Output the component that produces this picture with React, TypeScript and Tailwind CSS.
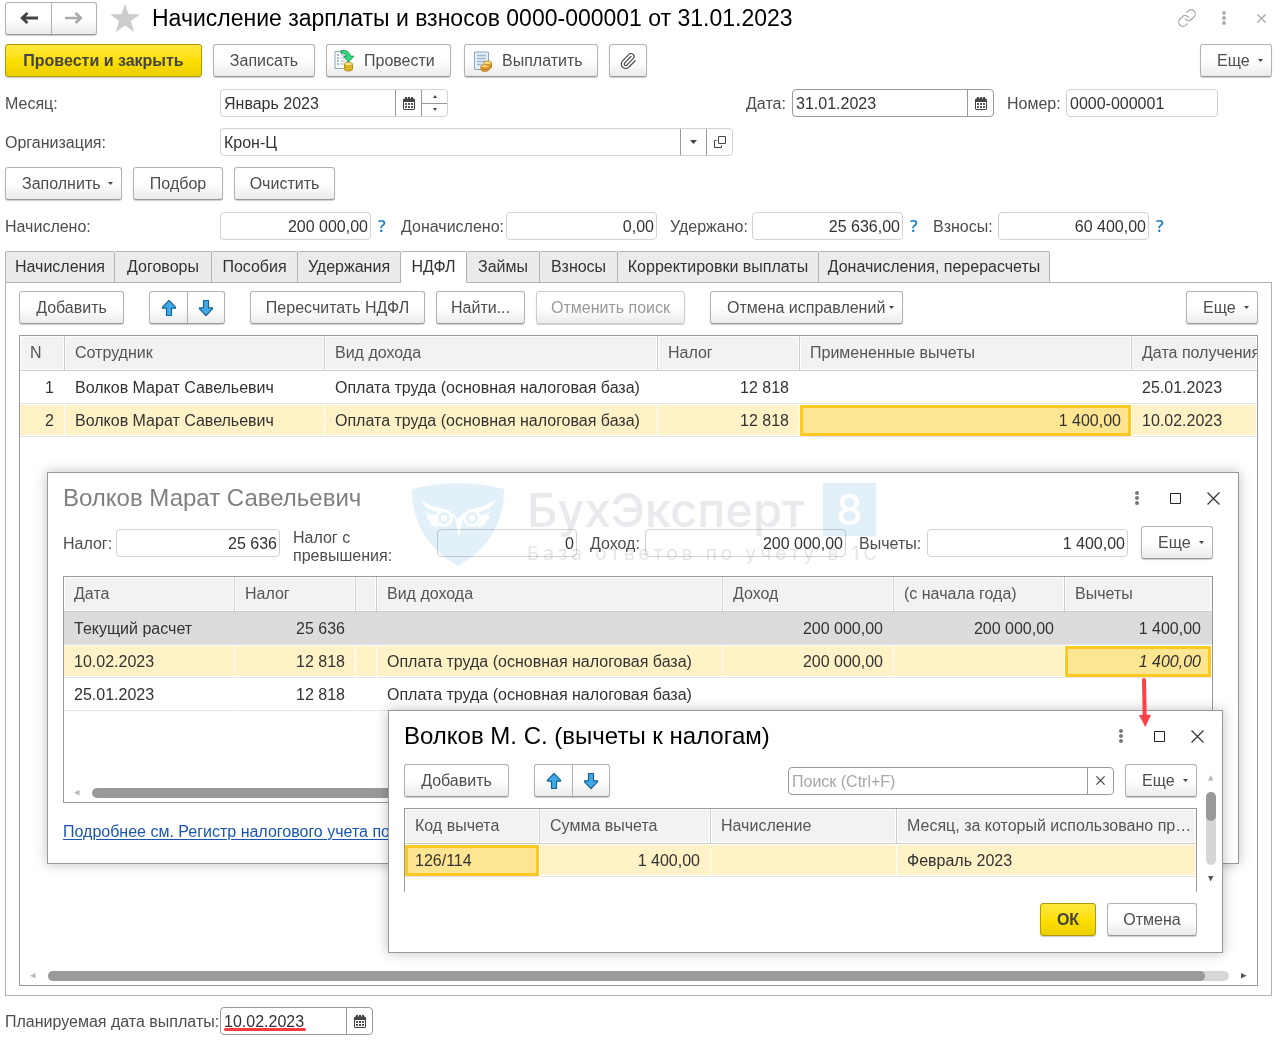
import React from "react";
import { Link, Paperclip } from "lucide-react";

const BTN =
  "flex h-[33px] shrink-0 items-center rounded-[3px] border border-[#b3b3b3] border-b-[#999999] bg-linear-to-b from-white from-50% to-[#ebebeb] whitespace-nowrap shadow-[0_1px_1px_#00000033]";
const YELLOW =
  "flex h-[33px] shrink-0 items-center justify-center rounded-[3px] border border-[#b09a05] bg-linear-to-b from-[#ffe83a] via-[#fddf00] to-[#ebcf00] font-bold whitespace-nowrap text-[#444444] shadow-[0_1px_1px_#00000033]";
const TABLE = "w-full table-fixed border-separate border-spacing-0 text-[#333333]";
const LABEL = "shrink-0 pt-[2px] whitespace-nowrap ";

function Caret() {
  return (
    <svg width="5" height="3" viewBox="0 0 5 3" aria-hidden="true">
      <path d="M0 0h5L2.500 3z" fill="#444" />
    </svg>
  );
}

function Triangle({ dir, muted }: { dir: "up" | "down" | "left" | "right"; muted?: boolean }) {
  const d = {
    up: "M0 5.500h5.500L2.700 0z",
    down: "M0 0h5.500L2.700 5.500z",
    left: "M5.500 0v5.500L0 2.700z",
    right: "M0 0v5.500l5.500-2.800z",
  }[dir];
  return (
    <svg width="6" height="6" viewBox="0 0 6 6" className="shrink-0" aria-hidden="true">
      <path d={d} fill={muted ? "#b8b8b8" : "#555"} />
    </svg>
  );
}

function MenuButton({ children, width = "w-[72px]" }: { children: React.ReactNode; width?: string }) {
  return (
    <button type="button" className={BTN + " justify-between pr-[8px] pl-[16px] " + width}>
      {children}
      <Caret />
    </button>
  );
}

function Button({
  children,
  disabled,
  width,
}: {
  children: React.ReactNode;
  disabled?: boolean;
  width: string;
}) {
  return (
    <button
      type="button"
      disabled={disabled}
      className={BTN + " justify-center disabled:border-[#cccccc] disabled:text-[#999999] " + width}
    >
      {children}
    </button>
  );
}

function BlueArrow({ down }: { down?: boolean }) {
  return (
    <svg width="16" height="18" viewBox="0 0 16 18" className={down ? "rotate-180" : ""} aria-hidden="true">
      <path
        d="M8 1.500 14.500 8.200v1H10.500v7.300H5.500V9.200H1.500v-1z"
        fill="#41abea"
        stroke="#17628f"
        strokeWidth="1.200"
        strokeLinejoin="round"
      />
    </svg>
  );
}

function MoveButtons() {
  return (
    <div className="ml-[25px] flex">
      <button type="button" aria-label="Вверх" className={BTN + " w-[39px] justify-center rounded-r-none"}>
        <BlueArrow />
      </button>
      <button type="button" aria-label="Вниз" className={BTN + " -ml-px w-[38px] justify-center rounded-l-none"}>
        <BlueArrow down />
      </button>
    </div>
  );
}

function CalendarIcon() {
  return (
    <svg width="12" height="13" viewBox="0 0 12 13" aria-hidden="true">
      <path
        fillRule="evenodd"
        d="M1 1.500h1V0h2v1.500h1V0h2v1.500h1V0h2v1.500h1l1 1V12l-1 1H1l-1-1V2.500zM1 5v7h10V5z"
        fill="#444"
      />
      <path d="M2 6h2v2H2zM5 6h2v2H5zM8 6h2v2H8zM2 9h2v2H2zM5 9h2v2H5zM8 9h2v2H8z" fill="#555" />
    </svg>
  );
}

function CalendarButton() {
  return (
    <button
      type="button"
      aria-label="Выбрать дату"
      className="flex w-[26px] shrink-0 items-center justify-center border-l border-[#999999]"
    >
      <CalendarIcon />
    </button>
  );
}

function Box({
  id,
  value,
  className,
  right,
  dark,
  children,
}: {
  id: string;
  value?: string;
  className: string;
  right?: boolean;
  dark?: boolean;
  children?: React.ReactNode;
}) {
  return (
    <div
      className={
        "flex h-[28px] min-w-0 overflow-hidden rounded-[4px] border bg-white " +
        (dark ? "border-[#999999] " : "border-[#d2d2d2] ") +
        className
      }
    >
      <input
        id={id}
        type="text"
        defaultValue={value}
        className={
          "w-0 min-w-0 flex-1 px-[3px] pt-[2px] text-[#333333] outline-none " + (right ? "pr-[2px] text-right" : "")
        }
      />
      {children}
    </div>
  );
}

function Help() {
  return (
    <a href="#help" className="ml-[7px] w-[23px] font-['Open_Sans',sans-serif] text-[17px] font-semibold text-[#1b7fc4]">
      ?
    </a>
  );
}

function PostIcon() {
  return (
    <svg width="22" height="22" viewBox="0 0 22 22" aria-hidden="true">
      <path d="M1 1.500h12.500v17H1z" fill="#fafcfd" stroke="#8fa3b5" />
      <path d="M3 5h2M3 8h2M3 11h2M3 14h2" stroke="#5c7894" />
      <path d="M6.500 5h5M6.500 8h5M6.500 11h5M6.500 14h5" stroke="#a9b9c7" />
      <path d="M7 .6c5-.8 9 1.400 9.300 5.600h3.500L14.600 12 9.700 6.200h3C12.300 3.800 10 2.800 7 3.200z" fill="#2fdc82" stroke="#159a55" />
      <path d="M10.500 14v5c0 1.300 2 2 4 2s4-.7 4-2v-5z" fill="#f3c93a" stroke="#b98b16" />
      <path d="M10.500 16.500c1 1.400 7 1.400 8 0M10.500 18.800c1 1.400 7 1.400 8 0" fill="none" stroke="#c99a1c" />
      <ellipse cx="14.500" cy="14" rx="4" ry="1.700" fill="#fdeb9a" stroke="#c99a1c" />
    </svg>
  );
}

function PayIcon() {
  return (
    <svg width="20" height="22" viewBox="0 0 20 22" aria-hidden="true">
      <path d="M1.500 2h14v17.500h-14z" fill="#e3eff8" stroke="#8aa6c0" />
      <path d="M4 5.500h9M4 8.500h9M4 11.500h9M4 14.500h5" stroke="#9db8cf" strokeWidth="1.300" />
      <path d="M8 16.500v3c0 2.400 7 2.400 8 .3l2.500-2.800v-4z" fill="#e9a93a" stroke="#b87a18" />
      <path d="M8.300 18.500c1 1.700 6 1.700 7.500 0l2.700-3" fill="none" stroke="#b87a18" />
      <ellipse cx="12" cy="16.300" rx="4" ry="1.700" fill="#fcd877" stroke="#c98b20" />
      <ellipse cx="14.500" cy="12.800" rx="4" ry="1.800" fill="#fddf87" stroke="#c98b20" />
    </svg>
  );
}

function Dots({ color }: { color: string }) {
  return (
    <svg width="6" height="14" viewBox="0 0 6 14" aria-hidden="true">
      <circle cx="3" cy="2" r="2" fill={color} />
      <circle cx="3" cy="7" r="2" fill={color} />
      <circle cx="3" cy="12" r="2" fill={color} />
    </svg>
  );
}

function Cross({ size, color, weight }: { size: number; color: string; weight: number }) {
  return (
    <svg width={size} height={size} viewBox="0 0 12 12" aria-hidden="true">
      <path d="M.5.5l11 11M11.500.5l-11 11" stroke={color} strokeWidth={weight} />
    </svg>
  );
}

function WindowTitle({ title, active }: { title: string; active?: boolean }) {
  const b = "flex h-[24px] w-[38px] items-center justify-center";
  return (
    <div className="flex h-[50px] items-center">
      <h2 className={"text-[24px] leading-[28px] whitespace-nowrap " + (active ? "text-black" : "text-[#808080]")}>
        {title}
      </h2>
      <div className="-mr-[19px] ml-auto flex">
        <button type="button" aria-label="Меню" className={b}>
          <Dots color="#777" />
        </button>
        <button type="button" aria-label="Развернуть" className={b}>
          <svg width="11" height="11" viewBox="0 0 11 11" aria-hidden="true">
            <path d="M.5.5h10v10H.5z" fill="none" stroke="#222" />
          </svg>
        </button>
        <button type="button" aria-label="Закрыть" className={b}>
          <Cross size={13} color="#333" weight={1.1} />
        </button>
      </div>
    </div>
  );
}

function HeadRow({ names }: { names: string[] }) {
  return (
    <thead>
      <tr>
        {names.map((n, i) => (
          <th
            key={i}
            scope="col"
            className="h-[35px] truncate border-r border-b border-[#cccccc] bg-[#f2f2f2] px-[10px] text-left font-normal text-[#555555] shadow-[inset_0_0_0_1px_#ffffff] last:border-r-transparent last:pr-0"
          >
            {n}
          </th>
        ))}
      </tr>
    </thead>
  );
}

type Tone = "plain" | "gray" | "yellow";

function Row({
  cells,
  right,
  tone,
  selected,
  italic,
}: {
  cells: string[];
  right: number[];
  tone: Tone;
  selected?: number;
  italic?: boolean;
}) {
  const tones = {
    plain: "border-r-transparent border-t-transparent",
    gray: "border-r-transparent border-t-transparent bg-[#dcdcdc]",
    yellow: "border-r-white border-t-white bg-[#fef2c6] shadow-[inset_0_-1px_#ffffff]",
  };
  const sel =
    "border-r-white border-t-white bg-[#fee591] shadow-[inset_0_0_0_3px_#fbc920]" + (italic ? " italic" : "");
  return (
    <tr>
      {cells.map((c, i) => (
        <td
          key={i}
          className={
            "h-[33px] overflow-hidden border-t border-r border-b border-b-[#e5e5e5] px-[10px] pt-px whitespace-nowrap " +
            (right.includes(i) ? "text-right " : "") +
            (selected === i ? sel : tones[tone])
          }
        >
          {c}
        </td>
      ))}
    </tr>
  );
}

function Watermark() {
  return (
    <div className="pointer-events-none absolute top-[10px] left-[364px] flex mix-blend-multiply" aria-hidden="true">
      <svg width="92" height="83" viewBox="0 0 92 83">
        <path d="M0 6Q46-6 92 6C92 40 76 66 46 83 16 66 0 40 0 6z" fill="#e2f0f9" />
        <path
          d="M9 16c6 7 18 8 27 12 5 2 7 5 10 8 3-3 5-6 10-8 9-4 21-5 27-12-2 8-9 12-17 13-6 0-12 2-15 6l-4 19-4-19c-3-4-9-6-15-6C18 28 11 24 9 16z"
          fill="#fff"
        />
        <path
          d="M12 27c4 4 8 5 13 5l-2 6c1 2 2 4 4 6-5 0-9-2-10-5h3c-4-2-6-4-6-7l4 1c-3-2-5-4-6-6zM80 27c-4 4-8 5-13 5l2 6c-1 2-2 4-4 6 5 0 9-2 10-5h-3c4-2 6-4 6-7l-4 1c3-2 5-4 6-6z"
          fill="#fff"
        />
        <circle cx="32" cy="35" r="9" fill="#fff" />
        <circle cx="60" cy="35" r="9" fill="#fff" />
        <circle cx="32" cy="35" r="4.500" fill="none" stroke="#e2f0f9" strokeWidth="3" />
        <circle cx="60" cy="35" r="4.500" fill="none" stroke="#e2f0f9" strokeWidth="3" />
      </svg>
      <div className="ml-[23px] font-[Inter,'Open_Sans',sans-serif]">
        <div className="flex h-[53px] w-[349px] items-center justify-between">
          <span className="text-[47px] leading-[53px] font-medium text-[#e9e9ee]">БухЭксперт</span>
          <span className="flex h-[53px] w-[53px] items-center justify-center bg-[#e2f0f9] text-[42px] leading-[53px] font-medium text-white">
            8
          </span>
        </div>
        <div className="mt-[8px] text-[19px] leading-[20px] tracking-[4px] whitespace-nowrap text-[#e6e6ea]">
          База ответов по учету в 1С
        </div>
      </div>
    </div>
  );
}

function EmployeeWindow() {
  return (
    <section className="absolute top-[136px] right-[18px] left-[27px] border border-[#999999] bg-white pr-[25px] pb-[22px] pl-[15px] shadow-[0_0_12px_#00000040]">
      <WindowTitle title="Волков Марат Савельевич" />
      <div className="mt-[3px] flex h-[33px] items-center">
        <label htmlFor="tax" className={LABEL + "w-[53px]"}>Налог:</label>
        <Box id="tax" value="25 636" right className="grow basis-[164px]" />
        <label htmlFor="over" className="mt-[8px] ml-[13px] w-[144px] shrink-0 leading-[18px]">
          Налог с<br />превышения:
        </label>
        <Box id="over" value="0" right className="grow basis-[140px]" />
        <label htmlFor="income" className={LABEL + "ml-[13px] w-[55px]"}>Доход:</label>
        <Box id="income" value="200 000,00" right className="grow basis-[201px]" />
        <label htmlFor="deduct" className={LABEL + "ml-[13px] w-[68px]"}>Вычеты:</label>
        <Box id="deduct" value="1 400,00" right className="mr-[13px] grow basis-[201px]" />
        <MenuButton>Еще</MenuButton>
      </div>
      <div className="mt-[17px] flex min-h-[227px] flex-col border border-[#999999]">
        <table className={TABLE}>
          <colgroup>
            <col className="w-[171px]" />
            <col className="w-[121px]" />
            <col className="w-[21px]" />
            <col />
            <col className="w-[171px]" />
            <col className="w-[171px]" />
            <col className="w-[147px]" />
          </colgroup>
          <HeadRow names={["Дата", "Налог", "", "Вид дохода", "Доход", "(с начала года)", "Вычеты"]} />
          <tbody>
            <Row
              tone="gray"
              right={[1, 4, 5, 6]}
              cells={["Текущий расчет", "25 636", "", "", "200 000,00", "200 000,00", "1 400,00"]}
            />
            <Row
              tone="yellow"
              right={[1, 4, 5, 6]}
              selected={6}
              italic
              cells={["10.02.2023", "12 818", "", "Оплата труда (основная налоговая база)", "200 000,00", "", "1 400,00"]}
            />
            <Row
              tone="plain"
              right={[1, 4, 5, 6]}
              cells={["25.01.2023", "12 818", "", "Оплата труда (основная налоговая база)", "", "", ""]}
            />
          </tbody>
        </table>
        <div className="mt-auto mb-[4px] flex items-center gap-[12px] px-[10px]">
          <Triangle dir="left" muted />
          <div className="h-[10px] flex-1 rounded-full bg-[#999999]" />
          <Triangle dir="right" />
        </div>
      </div>
      <a
        href="#register"
        className="mt-[20px] block leading-[18px] whitespace-nowrap text-[#1a56b0] underline decoration-[#1a56b0] decoration-1 underline-offset-2"
      >
        Подробнее см. Регистр налогового учета по&nbsp;
      </a>
      <Watermark />
    </section>
  );
}

function DeductionsWindow() {
  return (
    <section className="absolute top-[374px] right-[34px] left-[368px] border border-[#999999] bg-white pr-[25px] pb-[16px] pl-[15px] shadow-[0_0_12px_#00000040]">
      <WindowTitle title="Волков М. С. (вычеты к налогам)" active />
      <div className="mt-[3px] flex items-center">
        <Button width="w-[105px]">Добавить</Button>
        <MoveButtons />
        <div className="mr-[11px] ml-auto flex h-[28px] w-[326px] rounded-[4px] border border-[#999999]">
          <input
            type="text"
            aria-label="Поиск"
            placeholder="Поиск (Ctrl+F)"
            className="w-0 flex-1 px-[3px] pt-[2px] outline-none placeholder:text-[#a6a6a6]"
          />
          <button
            type="button"
            aria-label="Очистить поиск"
            className="flex w-[26px] items-center justify-center border-l border-[#999999]"
          >
            <Cross size={9} color="#444" weight={1.6} />
          </button>
        </div>
        <MenuButton>Еще</MenuButton>
      </div>
      <div className="mt-[11px] min-h-[84px] border border-b-0 border-[#999999]">
        <table className={TABLE}>
          <colgroup>
            <col className="w-[135px]" />
            <col className="w-[171px]" />
            <col className="w-[186px]" />
            <col />
          </colgroup>
          <HeadRow names={["Код вычета", "Сумма вычета", "Начисление", "Месяц, за который использовано право на вычет"]} />
          <tbody>
            <Row tone="yellow" right={[1]} selected={0} cells={["126/114", "1 400,00", "", "Февраль 2023"]} />
          </tbody>
        </table>
      </div>
      <div className="mt-[11px] flex justify-end gap-[11px]">
        <button type="button" className={YELLOW + " w-[56px]"}>ОК</button>
        <Button width="w-[90px]">Отмена</Button>
      </div>
      <div className="absolute top-[64px] right-[5px] flex h-[107px] w-[12px] flex-col items-center">
        <Triangle dir="up" muted />
        <div className="my-[11px] w-[10px] flex-1 rounded-full bg-[#d6d6d6]">
          <div className="h-[29px] rounded-full bg-[#999999]" />
        </div>
        <Triangle dir="down" />
      </div>
    </section>
  );
}

const TABS = [
  { name: "Начисления", width: "w-[110px]" },
  { name: "Договоры", width: "w-[97px]" },
  { name: "Пособия", width: "w-[86px]" },
  { name: "Удержания", width: "w-[103px]" },
  { name: "НДФЛ", width: "w-[66px]" },
  { name: "Займы", width: "w-[73px]" },
  { name: "Взносы", width: "w-[78px]" },
  { name: "Корректировки выплаты", width: "w-[201px]" },
  { name: "Доначисления, перерасчеты", width: "w-[231px]" },
];

export default function App() {
  return (
    <main className="bg-white pt-[3px] pr-[16px] pb-[13px] pl-[5px] font-['Liberation_Sans',Arial,sans-serif] text-[16px] leading-[20px] text-[#4d4d4d]">
      <header className="flex h-[30px] items-center">
        <div className="flex">
          <button type="button" aria-label="Назад" className={BTN + " h-[30px] w-[47px] justify-center rounded-r-none"}>
            <svg width="18" height="12" viewBox="0 0 18 12" aria-hidden="true">
              <path d="M7.500 1 2.200 6l5.300 5M2.500 6H18" fill="none" stroke="#444" strokeWidth="2.800" />
            </svg>
          </button>
          <button type="button" aria-label="Вперед" className={BTN + " -ml-px h-[30px] w-[46px] justify-center rounded-l-none"}>
            <svg width="18" height="12" viewBox="0 0 18 12" aria-hidden="true">
              <path d="M10.500 1l5.300 5-5.300 5M15.500 6H0" fill="none" stroke="#aaa" strokeWidth="2.600" />
            </svg>
          </button>
        </div>
        <button type="button" aria-label="В избранное" className="ml-[13px] shrink-0">
          <svg width="30" height="28" viewBox="0 0 30 28" aria-hidden="true">
            <path d="M15 0l3.700 10.300H30L20.900 17l3.400 11L15 21.400 5.700 28l3.400-11L0 10.300h11.300z" fill="#cccccc" />
          </svg>
        </button>
        <h1 className="ml-[12px] text-[23px] leading-[28px] whitespace-nowrap text-black">
          Начисление зарплаты и взносов 0000-000001 от 31.01.2023
        </h1>
        <div className="ml-auto flex items-center">
          <button type="button" aria-label="Ссылка">
            <Link size={20} strokeWidth={1.5} color="#aaaaaa" />
          </button>
          <button type="button" aria-label="Меню" className="ml-[24px]">
            <Dots color="#b0b0b0" />
          </button>
          <button type="button" aria-label="Закрыть" className="mr-[6px] ml-[30px]">
            <Cross size={9} color="#aaa" weight={1.8} />
          </button>
        </div>
      </header>

      <div className="mt-[11px] flex gap-[11px]">
        <button type="button" className={YELLOW + " w-[197px]"}>Провести и закрыть</button>
        <Button width="w-[102px]">Записать</Button>
        <button type="button" className={BTN + " w-[125px] gap-[8px] pl-[7px]"}>
          <PostIcon />
          Провести
        </button>
        <button type="button" className={BTN + " ml-[2px] w-[134px] gap-[9px] pl-[8px]"}>
          <PayIcon />
          Выплатить
        </button>
        <button type="button" aria-label="Вложения" className={BTN + " w-[38px] justify-center"}>
          <Paperclip size={18} strokeWidth={1.5} color="#444" />
        </button>
        <div className="ml-auto">
          <MenuButton>Еще</MenuButton>
        </div>
      </div>

      <div className="mt-[12px] flex items-center">
        <label htmlFor="month" className={LABEL + "w-[215px]"}>Месяц:</label>
        <Box id="month" value="Январь 2023" className="w-[228px]">
          <CalendarButton />
          <div className="flex w-[26px] flex-col border-l border-[#999999]">
            <button type="button" aria-label="Следующий месяц" className="flex flex-1 items-center justify-center border-b border-[#999999]">
              <svg width="4" height="3" viewBox="0 0 4 3" aria-hidden="true"><path d="M0 3h4L2 0z" fill="#444" /></svg>
            </button>
            <button type="button" aria-label="Предыдущий месяц" className="flex flex-1 items-center justify-center">
              <svg width="4" height="3" viewBox="0 0 4 3" aria-hidden="true"><path d="M0 0h4L2 3z" fill="#444" /></svg>
            </button>
          </div>
        </Box>
        <label htmlFor="date" className={LABEL + "ml-auto w-[46px]"}>Дата:</label>
        <Box id="date" value="31.01.2023" dark className="w-[202px]">
          <CalendarButton />
        </Box>
        <label htmlFor="number" className={LABEL + "ml-[13px] w-[59px]"}>Номер:</label>
        <Box id="number" value="0000-000001" className="mr-[54px] w-[152px]" />
      </div>

      <div className="mt-[11px] flex items-center">
        <label htmlFor="org" className={LABEL + "w-[215px]"}>Организация:</label>
        <Box id="org" value="Крон-Ц" className="w-[513px]">
          <button type="button" aria-label="Показать список" className="flex w-[26px] items-center justify-center border-l border-[#999999]">
            <svg width="7" height="4" viewBox="0 0 7 4" aria-hidden="true"><path d="M0 0h7L3.500 4z" fill="#444" /></svg>
          </button>
          <button type="button" aria-label="Открыть" className="flex w-[26px] items-center justify-center border-l border-[#999999]">
            <svg width="12" height="12" viewBox="0 0 12 12" fill="none" stroke="#444" aria-hidden="true">
              <path d="M4.500.5h7v7h-7zM2.500 4.500h-2v7h7v-2" />
            </svg>
          </button>
        </Box>
      </div>

      <div className="mt-[11px] flex gap-[11px]">
        <MenuButton width="w-[117px]">Заполнить</MenuButton>
        <Button width="w-[90px]">Подбор</Button>
        <Button width="w-[101px]">Очистить</Button>
      </div>

      <div className="mt-[12px] flex items-center">
        <label htmlFor="accrued" className={LABEL + "w-[215px]"}>Начислено:</label>
        <Box id="accrued" value="200 000,00" right className="w-[151px]" />
        <Help />
        <label htmlFor="extra" className={LABEL + "w-[105px]"}>Доначислено:</label>
        <Box id="extra" value="0,00" right className="w-[151px]" />
        <label htmlFor="withheld" className={LABEL + "ml-[13px] w-[82px]"}>Удержано:</label>
        <Box id="withheld" value="25 636,00" right className="w-[151px]" />
        <Help />
        <label htmlFor="fees" className={LABEL + "w-[65px]"}>Взносы:</label>
        <Box id="fees" value="60 400,00" right className="w-[151px]" />
        <Help />
      </div>

      <div role="tablist" className="relative z-10 mt-[11px] -mb-px flex">
        {TABS.map((t) => (
          <button
            key={t.name}
            type="button"
            role="tab"
            aria-selected={t.name === "НДФЛ"}
            className={
              "h-[32px] rounded-t-[2px] border border-l-0 border-[#b3b3b3] bg-[#ebebeb] text-center whitespace-nowrap text-[#333333] first:border-l aria-selected:border-b-white aria-selected:bg-white " +
              t.width
            }
          >
            {t.name}
          </button>
        ))}
      </div>

      <div className="border border-[#b3b3b3] px-[13px] pt-[8px] pb-[9px]">
        <div className="flex">
          <Button width="w-[105px]">Добавить</Button>
          <MoveButtons />
          <div className="ml-[25px] flex gap-[11px]">
            <Button width="w-[175px]">Пересчитать НДФЛ</Button>
            <Button width="w-[89px]">Найти...</Button>
            <Button width="w-[149px]" disabled>Отменить поиск</Button>
          </div>
          <div className="ml-[25px]">
            <MenuButton width="w-[193px]">Отмена исправлений</MenuButton>
          </div>
          <div className="ml-auto">
            <MenuButton>Еще</MenuButton>
          </div>
        </div>

        <div className="relative mt-[11px] flex min-h-[651px] flex-col border border-[#999999]">
          <table className={TABLE}>
            <colgroup>
              <col className="w-[45px]" />
              <col className="w-[260px]" />
              <col className="w-[333px]" />
              <col className="w-[142px]" />
              <col className="w-[332px]" />
              <col />
            </colgroup>
            <thead>
              <tr>
                {["N", "Сотрудник", "Вид дохода", "Налог", "Примененные вычеты", "Дата получения"].map((n) => (
                  <th
                    key={n}
                    scope="col"
                    className="h-[35px] overflow-hidden border-r border-b border-[#cccccc] bg-[#f2f2f2] pl-[10px] text-left font-normal whitespace-nowrap text-[#555555] shadow-[inset_0_0_0_1px_#ffffff] last:border-r-0"
                  >
                    {n}
                  </th>
                ))}
              </tr>
            </thead>
            <tbody>
              <Row
                tone="plain"
                right={[0, 3, 4]}
                cells={["1", "Волков Марат Савельевич", "Оплата труда (основная налоговая база)", "12 818", "", "25.01.2023"]}
              />
              <Row
                tone="yellow"
                right={[0, 3, 4]}
                selected={4}
                cells={["2", "Волков Марат Савельевич", "Оплата труда (основная налоговая база)", "12 818", "1 400,00", "10.02.2023"]}
              />
            </tbody>
          </table>

          <div className="mt-auto mb-[4px] flex items-center gap-[12px] px-[10px]">
            <Triangle dir="left" muted />
            <div className="h-[10px] flex-1 rounded-full bg-[#d6d6d6]">
              <div className="h-[10px] w-[98%] rounded-full bg-[#999999]" />
            </div>
            <Triangle dir="right" />
          </div>

          <EmployeeWindow />
          <DeductionsWindow />

          <svg
            width="14"
            height="50"
            viewBox="0 0 14 50"
            className="pointer-events-none absolute top-[341px] right-[105px]"
            aria-hidden="true"
          >
            <path d="M6 3l.7 36" stroke="#fb4146" strokeWidth="4" strokeLinecap="round" />
            <path d="M1 38l12-.3L7.300 50z" fill="#fb4146" />
          </svg>
        </div>
      </div>

      <footer className="mt-[11px] flex items-center">
        <label htmlFor="payday" className={LABEL + "w-[215px]"}>Планируемая дата выплаты:</label>
        <div className="relative">
          <Box id="payday" value="10.02.2023" dark className="w-[153px]">
            <CalendarButton />
          </Box>
          <div className="absolute bottom-[4px] left-[4px] h-[3px] w-[82px] rounded-full bg-[#fb3b40]" />
        </div>
      </footer>
    </main>
  );
}
